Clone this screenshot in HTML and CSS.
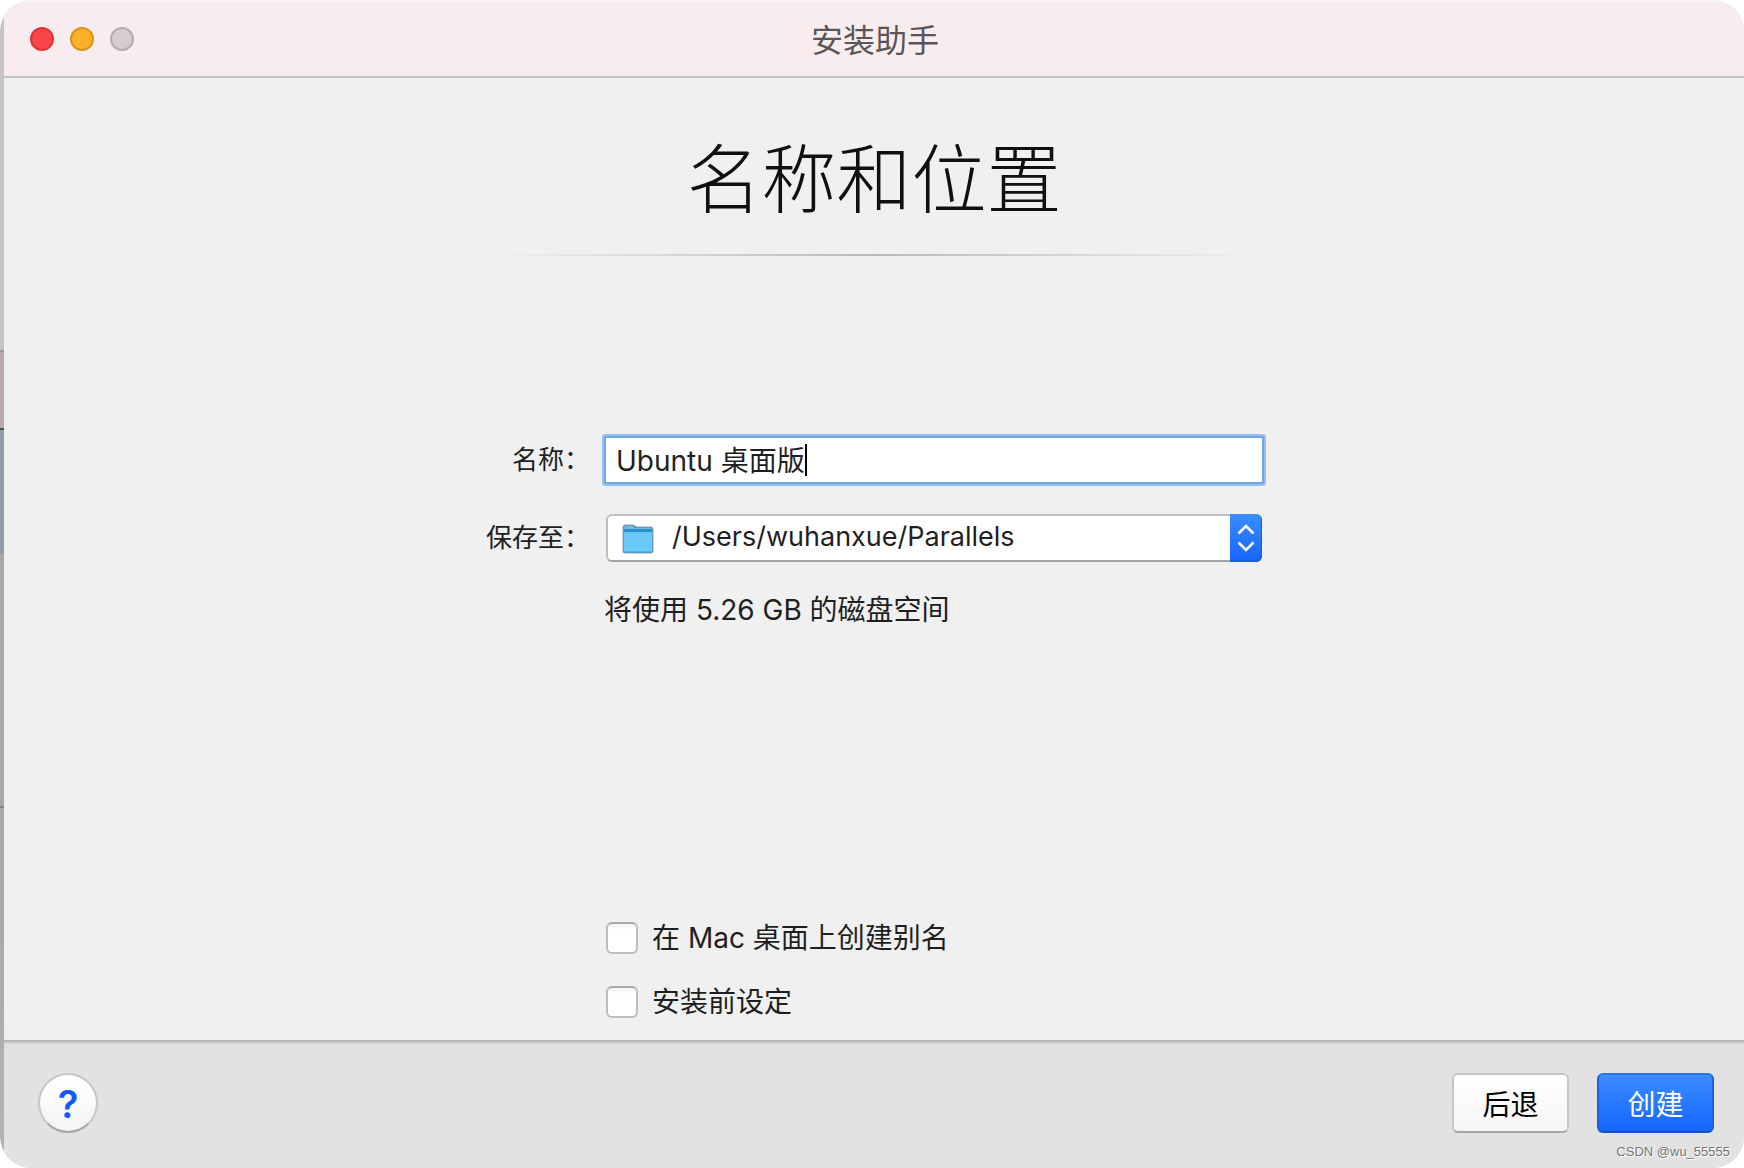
FILE: index.html
```html
<!DOCTYPE html>
<html lang="zh-CN">
<head>
<meta charset="utf-8">
<title>安装助手</title>
<link rel="stylesheet" href="styles.css">
</head>
<body>
<div class="frame">
  <div class="window">
    <header class="titlebar">
      <div class="lights">
        <button class="light close" type="button" aria-label="关闭"></button>
        <button class="light minimize" type="button" aria-label="最小化"></button>
        <button class="light disabled" type="button" aria-label="缩放" disabled></button>
      </div>
      <span class="window-title">安装助手</span>
    </header>
    <form class="assistant">
      <main class="content">
        <h1 class="heading">名称和位置</h1>
        <div class="rule"></div>
        <div class="fields">
          <label class="label" for="name">名称：</label>
          <div class="name-box">
            <input class="name-input" id="name" type="text" value="Ubuntu 桌面版">
            <span class="caret"></span>
          </div>
          <label class="label" for="location">保存至：</label>
          <div class="location-box">
            <svg class="folder" viewBox="0 0 32 30" aria-hidden="true">
              <defs>
                <linearGradient id="front" x1="0" y1="0" x2="0" y2="1">
                  <stop offset="0" stop-color="#6bc6f5"/>
                  <stop offset="1" stop-color="#67cbfa"/>
                </linearGradient>
              </defs>
              <path d="M1 28V3q0-2 2-2h8q2 0 3 2h15q2 0 2 2v23q0 1-2 1H3q-2 0-2-1z" fill="#2692d6" stroke="#9aa4ab" stroke-width="1"/>
              <path d="M2 4q0-2 2-2h7l2 2h15q2 0 2 1H2z" fill="#79b9de"/>
              <path d="M2 8h28v19q0 1-2 1H4q-2 0-2-1z" fill="url(#front)"/>
              <path d="M3 28h26" stroke="#3a9bd0" stroke-width="1"/>
            </svg>
            <select class="location-select" id="location">
              <option>/Users/wuhanxue/Parallels</option>
            </select>
            <span class="stepper">
              <svg viewBox="0 0 32 48" aria-hidden="true">
                <path d="M8.500 19.500 16 12l7.500 7.500M8.500 28.500 16 36l7.500-7.500" fill="none" stroke="#fff" stroke-width="2.500"/>
              </svg>
            </span>
          </div>
          <p class="space-note">将使用 5.26 GB 的磁盘空间</p>
        </div>
        <div class="options">
          <label class="option"><input class="check" type="checkbox">在 Mac 桌面上创建别名</label>
          <label class="option"><input class="check" type="checkbox">安装前设定</label>
        </div>
      </main>
      <footer class="footer">
        <button class="help" type="button" aria-label="帮助">?</button>
        <div class="actions">
          <button class="button" type="button">后退</button>
          <button class="button primary" type="button">创建</button>
        </div>
        <span class="watermark">CSDN @wu_55555</span>
      </footer>
    </form>
  </div>
</div>
</body>
</html>
```
FILE: styles.css
```css
* {
  box-sizing: border-box;
}

body {
  margin: 0;
  background: #fff;
  color: #1f1f1f;
  font-family: Inter, "Noto Sans CJK SC", sans-serif;
  font-size: 28px;
  line-height: 40px;
}

button,
input,
select {
  margin: 0;
  font: inherit;
  color: inherit;
}

.frame {
  display: flex;
  min-height: 100vh;
  padding-left: 4px;
  border-radius: 32px;
  overflow: hidden;
  background: linear-gradient(#c4c4c4 0 350px, #999 350px 352px, #b9a9ab 352px 428px, #4b4e58 428px 430px, #939cab 430px 554px, #a9a8a6 554px 806px, #858585 806px 808px, #a8a8a8 808px 900px, #b4b4b4);
}

.window {
  flex: 1;
  display: flex;
  flex-direction: column;
  background: #f0f0f0;
}

.titlebar {
  display: grid;
  grid-template-columns: 1fr auto 1fr;
  align-items: center;
  height: 78px;
  padding: 0 26px;
  border-top: 2px solid #fbf4f5;
  border-bottom: 2px solid #c3c1c2;
  background: #f9ecef;
}

.lights {
  display: flex;
  gap: 16px;
}

.light {
  width: 24px;
  height: 24px;
  padding: 0;
  border: 2px solid #dd3538;
  border-radius: 50%;
  background: #fc4548;
}

.minimize {
  border-color: #dc9318;
  background: #fdb025;
}

.disabled {
  border-color: #b8abad;
  background: #d8cccf;
}

.window-title {
  padding: 4px 0 0 2px;
  color: #5a5658;
  font-size: 32px;
}

.assistant,
.content {
  flex: 1;
  display: flex;
  flex-direction: column;
}

.content {
  align-items: center;
  padding: 58px 24px 18px;
}

.heading {
  margin: 0;
  color: #101010;
  font-size: 75px;
  font-weight: 300;
  line-height: 88px;
}

.rule {
  width: 100%;
  max-width: 760px;
  height: 2px;
  margin-top: 30px;
  background: linear-gradient(90deg, transparent, #b9b9b9 50%, transparent);
}

.fields,
.options {
  width: 100%;
  max-width: 784px;
}

.fields {
  display: grid;
  grid-template-columns: 108px 1fr;
  column-gap: 12px;
  align-items: center;
  margin-top: 178px;
}

.label {
  justify-self: end;
  font-size: 26px;
  white-space: nowrap;
}

.name-box {
  position: relative;
}

.name-input {
  display: block;
  width: 100%;
  height: 52px;
  padding: 0 12px 2px;
  border: 2px solid #93c0f5;
  border-radius: 3px;
  outline: 2px solid #74a7df;
  outline-offset: -4px;
  background: #fff;
}

.caret {
  position: absolute;
  top: 10px;
  left: 203px;
  width: 2px;
  height: 32px;
  background: #000;
}

.location-box {
  position: relative;
  margin: 28px 4px 0;
}

.label[for="location"] {
  margin-top: 28px;
}

.location-select {
  display: block;
  width: 100%;
  height: 48px;
  padding: 0 40px 2px 64px;
  border: 2px solid #bfbfbf;
  border-bottom-color: #a3a3a3;
  border-radius: 6px;
  appearance: none;
  background: #fff;
  font-size: 27px;
}

.folder {
  position: absolute;
  top: 10px;
  left: 16px;
  width: 32px;
  height: 30px;
}

.stepper {
  position: absolute;
  top: 0;
  right: 0;
  width: 32px;
  height: 48px;
  border-radius: 0 6px 6px 0;
  background: linear-gradient(#3a8dff, #1565ff);
  box-shadow: inset -1px -2px 0 #1a5fe0;
  pointer-events: none;
}

.stepper svg {
  display: block;
}

.space-note {
  grid-column: 2;
  margin: 28px 2px 0;
}

.options {
  display: flex;
  flex-direction: column;
  gap: 24px;
  margin-top: auto;
  padding-left: 124px;
}

.option {
  display: flex;
  align-items: center;
  gap: 14px;
}

.check {
  width: 32px;
  height: 32px;
  border: 2px solid #bdbdbd;
  border-top-color: #a9a9a9;
  border-radius: 6px;
  appearance: none;
  background: linear-gradient(#f1f1f1, #fff 6px);
}

.footer {
  position: relative;
  display: flex;
  align-items: center;
  justify-content: space-between;
  height: 128px;
  padding: 0 30px 4px 34px;
  border-top: 2px solid #b5b7bb;
  background: #e2e2e2;
  box-shadow: inset 0 2px 0 #d3d4d8;
}

.help {
  width: 60px;
  height: 60px;
  padding: 2px 0 0;
  border: 2px solid #c6c6c6;
  border-bottom-color: #a6a6a6;
  border-radius: 50%;
  background: linear-gradient(#fff, #f4f4f6);
  color: #0f5bff;
  font-size: 38px;
  font-weight: 600;
}

.actions {
  display: flex;
  gap: 28px;
}

.button {
  width: 117px;
  height: 60px;
  padding: 4px 0 0;
  border: 2px solid #c6c6c6;
  border-bottom-color: #a6a6a6;
  border-radius: 6px;
  background: linear-gradient(#fff, #f5f5f7);
  color: #000;
}

.primary {
  border-color: #2b76e6 #1c62dd #1550c4;
  background: linear-gradient(#3a8dff, #1565ff);
  color: #fff;
}

.watermark {
  position: absolute;
  right: 14px;
  bottom: 8px;
  color: #777;
  font-family: "Liberation Sans", sans-serif;
  font-size: 13px;
  line-height: 16px;
  text-shadow: 1px 1px 0 #fff;
}
```
